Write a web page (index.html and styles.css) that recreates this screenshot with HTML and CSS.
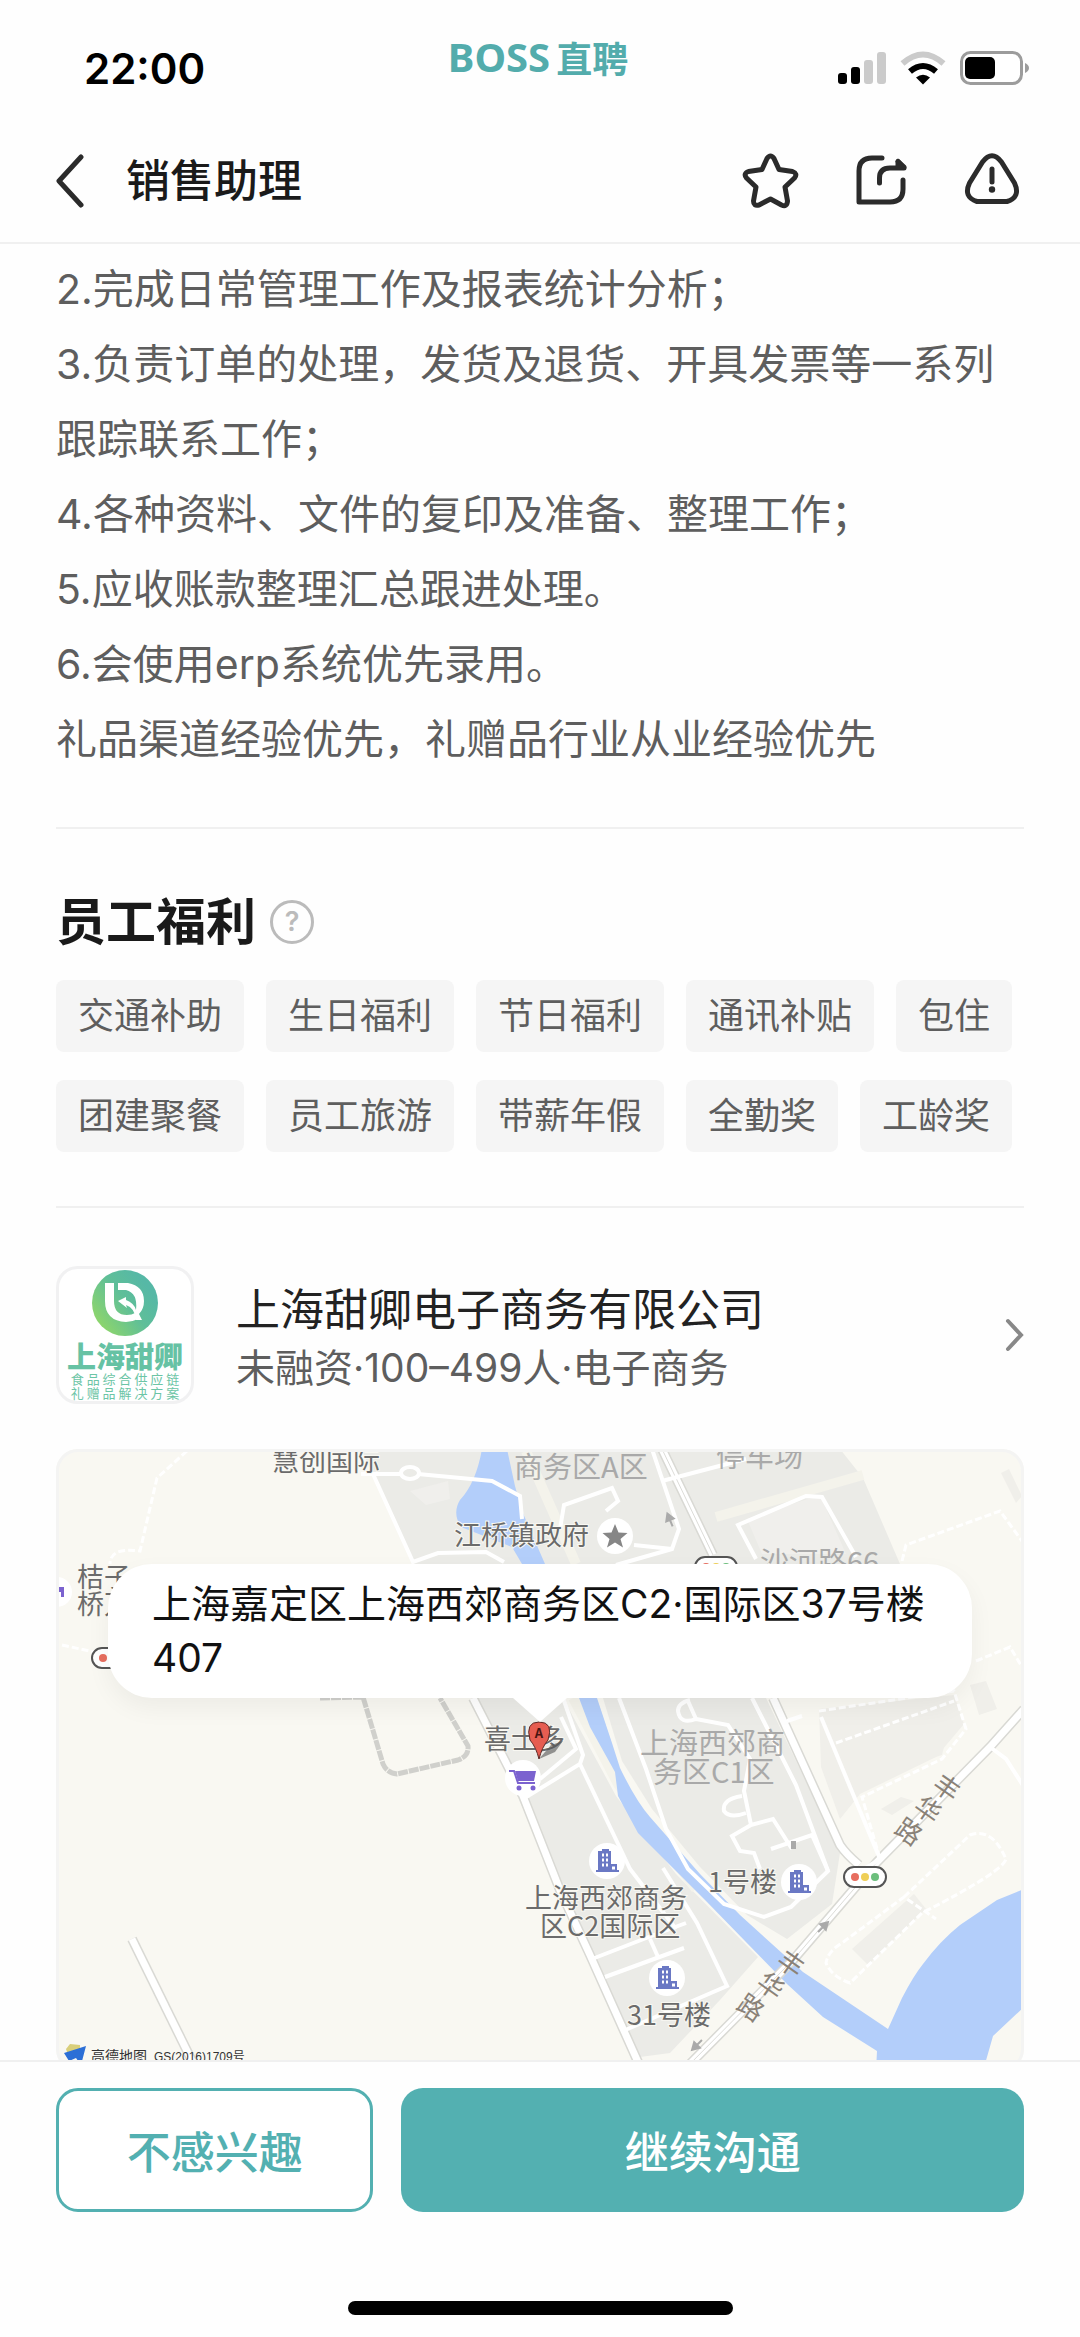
FILE: index.html
```html
<!DOCTYPE html>
<html lang="zh-CN">
<head>
    <meta charset="UTF-8">
    <meta name="viewport" content="width=device-width, initial-scale=1">
    <title>销售助理 - BOSS直聘</title>
    <link rel="stylesheet" href="styles.css">
</head>
<body>

<div class="status">
    <div class="time">22:00</div>
    <div class="brand"><span class="brand-en">BOSS</span><span>直聘</span></div>
    <div class="status-icons">
        <svg width="48" height="34" viewBox="0 0 48 34">
            <rect x="0" y="22" width="9" height="11" rx="3"/>
            <rect x="13" y="16" width="9" height="17" rx="3"/>
            <rect x="26" y="9" width="9" height="24" rx="3" fill="#cbcbcb"/>
            <rect x="39" y="1" width="9" height="32" rx="3" fill="#cbcbcb"/>
        </svg>
        <svg width="46" height="34" viewBox="0 0 46 34">
            <path d="M2.500 12.500 Q23 -5.500 43.500 12.500" fill="none" stroke="#cbcbcb" stroke-width="6"/>
            <path d="M10 20.500 Q23 9.500 36 20.500" fill="none" stroke="#000" stroke-width="6"/>
            <path d="M16 26.500 Q23 21 30 26.500 L23 33.500 Z"/>
        </svg>
        <svg width="70" height="34" viewBox="0 0 70 34">
            <rect x="1.500" y="1.500" width="60" height="31" rx="9" fill="#fff" stroke="#9c9c9c" stroke-width="3"/>
            <rect x="5" y="6" width="30" height="22" rx="5"/>
            <path d="M65 12 Q69 14 69 17 Q69 20 65 22 Z" fill="#9c9c9c"/>
        </svg>
    </div>
</div>

<header class="nav">
    <button class="icon-btn back" aria-label="返回">
        <svg width="30" height="56" viewBox="0 0 30 56"><path d="M27 4 L5 28 L27 52"/></svg>
    </button>
    <h1>销售助理</h1>
    <div class="nav-actions">
        <button class="icon-btn" aria-label="收藏">
            <svg width="66" height="66" viewBox="0 0 66 66">
                <path d="M29 10.500 Q32.500 5.500 36 10.500 L41 21.500 L54.500 23.500 Q60 25.500 56.500 30 L47 39 L49.500 53 Q49 59.500 43.500 57 L32.500 51 L21 57 Q15.500 58.500 15.500 53 L18 39 L8.500 30 Q5 25.500 10.500 23.500 L24 21.500 Z"/>
            </svg>
        </button>
        <button class="icon-btn" aria-label="分享">
            <svg width="66" height="66" viewBox="0 0 66 66">
                <path d="M34 10 H24 Q11 10 11 23 V54 H42 Q55 54 55 41 V32"/>
                <path d="M31.500 35 V30 Q31.500 20 42 20 H56 L50 13.500"/>
                <path d="M50 13.500 V19 H56 Z" fill="#2b2b2b"/>
            </svg>
        </button>
        <button class="icon-btn" aria-label="举报">
            <svg width="66" height="66" viewBox="0 0 66 66">
                <path d="M24.500 14 Q34 1.500 43.500 14 L56.500 35 Q63 49 49 53.500 H19 Q5 49 11.500 35 Z"/>
                <path d="M34 21 V34"/>
                <circle cx="34" cy="41.500" r="3.200" fill="#2b2b2b" stroke="none"/>
            </svg>
        </button>
    </div>
</header>

<main class="content">
    <div class="description">
        <p>2.完成日常管理工作及报表统计分析；</p>
        <p>3.负责订单的处理，发货及退货、开具发票等一系列跟踪联系工作；</p>
        <p>4.各种资料、文件的复印及准备、整理工作；</p>
        <p>5.应收账款整理汇总跟进处理。</p>
        <p>6.会使用erp系统优先录用。</p>
        <p>礼品渠道经验优先，礼赠品行业从业经验优先</p>
    </div>

    <section class="welfare">
        <div class="welfare-head">
            <h2>员工福利</h2>
            <button class="help" aria-label="福利说明">?</button>
        </div>
        <ul class="tags">
            <li>交通补助</li>
            <li>生日福利</li>
            <li>节日福利</li>
            <li>通讯补贴</li>
            <li>包住</li>
            <li>团建聚餐</li>
            <li>员工旅游</li>
            <li>带薪年假</li>
            <li>全勤奖</li>
            <li>工龄奖</li>
        </ul>
    </section>

    <a class="company" href="#company">
        <svg class="company-logo" width="138" height="138" viewBox="0 0 138 138">
            <defs>
                <linearGradient id="logo" x1="0" y1="0.800" x2="0.800" y2="0.200">
                    <stop offset="0" stop-color="#93d866"/>
                    <stop offset="0.600" stop-color="#5fbf98"/>
                    <stop offset="1" stop-color="#56b8a6"/>
                </linearGradient>
            </defs>
            <rect x="1.500" y="1.500" width="135" height="135" rx="20" fill="#fff" stroke="#f1f1f2" stroke-width="3"/>
            <circle cx="69" cy="37" r="33" fill="url(#logo)"/>
            <path d="M49 17 H58 V35 Q58 49 71 49 Q76 49 79 47 L82 53 Q76 56 70 56 Q49 55 49 35 Z" fill="#fff"/>
            <path d="M62 17 H72 Q88 20 88 35 Q88 43 83 48 L86 54 H80 Q79 42 70 39 L71 42 L62 35 L70 31 V34 Q78 37 80 44 Q82 27 70 24 H62 Z" fill="#fff"/>
            <text class="logo-name" x="69" y="102">上海甜卿</text>
            <text class="logo-sub" x="69" y="118">食 品 综 合 供 应 链</text>
            <text class="logo-sub" x="69" y="132">礼 赠 品 解 决 方 案</text>
        </svg>
        <div class="company-info">
            <div class="company-name">上海甜卿电子商务有限公司</div>
            <div class="company-meta">未融资·100–499人·电子商务</div>
        </div>
        <svg class="arrow" width="22" height="34" viewBox="0 0 22 34"><path d="M6 3 L19 17 L6 31"/></svg>
    </a>

    <div class="map">
        <svg class="map-canvas" viewBox="0 0 968 622" preserveAspectRatio="xMidYMin slice">
            <defs>
                <g id="building">
                    <circle r="18" fill="#fff"/>
                    <path d="M-11 11 V9 H-9 V-10 H-5 V-12 H2 V-10 H4 V3 H10 V9 H12 V11 Z" fill="#6a78c4"/>
                    <path d="M-5 -6 h2 M-1 -6 h2 M-5 -1 h2 M-1 -1 h2 M-5 4 h2 M-1 4 h2 M5 7 h3" stroke="#fff" stroke-width="3"/>
                </g>
                <g id="light">
                    <rect x="-21" y="-10" width="42" height="20" rx="10" fill="#fff" stroke="#555" stroke-width="2"/>
                    <circle cx="-10" r="4" fill="#e76e5f"/>
                    <circle r="4" fill="#efcf57"/>
                    <circle cx="10" r="4" fill="#6cbf7d"/>
                </g>
                <path id="way" d="M-7 0 H4 M0 -4 L7 0 L0 4 Z" stroke="#aaa" stroke-width="2" fill="#aaa"/>
            </defs>

            <!-- blocks -->
            <g fill="#ebebe7">
                <path d="M305 0 H784 L807 29 L844 115 H357 L317 25 Z"/>
                <path d="M417 249 H507 L560 347 L620 425 L702 508 L664 551 L614 604 L584 608 L534 506 L504 441 Z"/>
                <path d="M547 249 H710 L784 404 L776 455 L731 490 L691 466 L644 418 L596 360 L566 312 Z"/>
            </g>
            <g fill="#f0efea">
                <path d="M763 260 L898 246 L908 275 L880 308 L804 345 L784 370 L765 318 Z"/>
                <path d="M780 300 L897 262 L886 306 L806 332 Z M825 360 L845 348 L858 352 L836 366 Z"/>
                <path d="M914 236 L930 232 L941 260 L923 266 Z M945 24 L953 20 L966 47 L960 54 Z"/>
                <path d="M796 500 L858 445 L870 460 L812 516 Z"/>
            </g>
            <path d="M354 42 L392 32 L394 50 L370 56 Z M691 70 L764 46 L790 105 H706 Z" fill="#f0efec"/>
            <path d="M660 68 L807 26 M470 2 L520 115 M517 249 L562 335 L640 440" fill="none" stroke="#f4f3eb" stroke-width="10"/>

            <!-- water -->
            <g fill="#b3cefa">
                <path d="M426 0 H451 L459 37 L466 62 L489 115 H466 L456 98 L405 78 Q396 64 404 51 Q420 34 426 0 Z"/>
                <path d="M523 249 H541 L556 294 L564 319 Q580 352 594 368 L644 425 L684 466 L747 523 L832 580 L846 549 Q858 526 867 515 Q884 492 904 476 L941 451 L968 440 V558 L937 587 L927 622 H820 L821 602 L767 568 L731 535 L651 453 L582 384 L562 347 L559 323 L534 278 Z"/>
            </g>

            <!-- roads with a light grey edge -->
            <g fill="none" stroke="#d9d9d4" stroke-width="10">
                <path d="M606 0 L657 106 M717 249 L784 396 Q790 405 803 416"/>
                <path d="M968 260 L934 298 L821 413 L737 511 L627 622"/>
                <path d="M417 249 L467 347 L504 441 L534 506 L586 622"/>
                <path d="M76 490 L136 612"/>
            </g>
            <g fill="none" stroke="#fff" stroke-width="7">
                <path d="M606 0 L657 106 M717 249 L784 396 Q790 405 803 416"/>
                <path d="M968 260 L934 298 L821 413 L737 511 L627 622"/>
                <path d="M417 249 L467 347 L504 441 L534 506 L586 622"/>
                <path d="M76 490 L136 612"/>
            </g>
            <path d="M606 0 L657 106 M821 413 L737 511 L627 622" fill="none" stroke="#dcdcd8" stroke-width="1"/>

            <!-- lanes -->
            <g fill="none" stroke="#fff" stroke-width="4">
                <path d="M305 25 H346 M362 25 L436 32 L464 47 L466 70 M317 25 L357 113 L382 104 L430 103 L448 113"/>
                <ellipse cx="354" cy="24" rx="9" ry="6"/>
                <path d="M596 0 L623 80 L616 100 L560 116 M504 80 L508 56 L556 39 L562 52 L550 62 M578 96 L616 100"/>
                <path d="M606 32 L690 10 M700 110 L682 76 L750 47 L766 48 L800 108"/>
                <path d="M467 350 L524 315 L527 306 L507 249 M524 315 L574 420 L620 480 M484 330 L520 300 L505 268"/>
                <path d="M536 510 L598 486 L630 474 M549 528 L628 499 M594 490 L602 508 M567 582 L671 537 L641 474 L607 419"/>
                <path d="M563 249 L590 320 L610 380 L632 420 L668 455 L708 468 L735 458 L772 422 L756 386 L715 400"/>
                <path d="M632 252 L640 270 Q624 276 622 262 Q622 254 634 251 M640 270 L672 276 L694 310 L688 342 L695 376 L717 370 L736 400 M695 376 L676 387 L684 402 L698 404 L704 420"/>
                <path d="M686 347 Q666 350 668 362 Q674 370 690 364 M696 249 L740 336 L772 422 M731 272 L746 267 M934 298 L950 310 L968 338"/>
                <path d="M808 420 L824 410 L765 268"/>
            </g>
            <g fill="none" stroke="#fff" stroke-width="3" stroke-dasharray="7 3">
                <path d="M131 2 L101 29 L84 102 Q54 98 54 115 M6 196 L38 203"/>
                <path d="M846 112 L850 96 L944 62 L966 92 M763 262 L898 242 L910 280 L886 310 L806 348 L824 410 M780 294 L898 252 M920 212 L954 198 L966 218"/>
                <path d="M848 448 L914 386 Q936 378 950 410 Q948 422 866 464 L794 534 Q776 528 770 514 Q772 502 786 494 L848 448 L880 470"/>
            </g>
            <path d="M264 249 L307 248 L327 315 Q331 324 341 325 L402 311 Q413 307 412 297 L384 249" fill="none" stroke="#d0d0cc" stroke-width="5" stroke-dasharray="10 1"/>
            <use href="#way" transform="translate(614 71) rotate(-112)"/>
            <use href="#way" transform="translate(767 478) rotate(-45)"/>
            <use href="#way" transform="translate(641 596) rotate(135)"/>
            <rect x="735" y="392" width="5" height="8" fill="#aaa"/>

            <!-- labels -->
            <g class="area">
                <text x="458" y="29">商务区A区</text>
                <text x="660" y="18">停车场</text>
                <text x="704" y="124">沙河路66</text>
                <text x="584" y="305">上海西郊商</text>
                <text x="597" y="334">务区C1区</text>
            </g>
            <g class="poi">
                <text x="216" y="22">慧创国际</text>
                <text x="398" y="96">江桥镇政府</text>
                <text x="21" y="138">桔子</text>
                <text x="21" y="165">桥万</text>
                <text x="428" y="300">喜士多</text>
                <text x="469" y="459">上海西郊商务</text>
                <text x="484" y="487">区C2国际区</text>
                <text x="652" y="443">1号楼</text>
                <text x="571" y="576">31号楼</text>
            </g>
            <g class="road">
                <text transform="translate(892 337) rotate(35)">丰</text>
                <text transform="translate(873 359) rotate(35)">华</text>
                <text transform="translate(854 381) rotate(35)">路</text>
                <text transform="translate(736 513) rotate(35)">丰</text>
                <text transform="translate(716 535) rotate(35)">华</text>
                <text transform="translate(696 557) rotate(35)">路</text>
            </g>

            <!-- markers -->
            <circle cx="559" cy="87" r="18" fill="#fff"/>
            <path d="M559 75 L562.500 83.500 L571.500 84 L564.500 90 L567 98.500 L559 93.500 L551 98.500 L553.500 90 L546.500 84 L555.500 83.500 Z" fill="#868686"/>
            <circle cx="1" cy="143" r="15" fill="#fff"/>
            <path d="M0 138 H8 V148 H5 V143 H0 Z" fill="#7b62cf"/>
            <circle cx="467" cy="329" r="18" fill="#fff"/>
            <path d="M453 322 H458 L462 334 H479" fill="none" stroke="#7b62cf" stroke-width="2"/>
            <path d="M459 322 H480 L478 332 H462 Z" fill="#7b62cf"/>
            <circle cx="463" cy="339" r="2.500" fill="#7b62cf"/>
            <circle cx="477" cy="339" r="2.500" fill="#7b62cf"/>
            <use href="#building" x="551" y="412"/>
            <use href="#building" x="743" y="433"/>
            <use href="#building" x="611" y="529"/>
            <use href="#light" x="809" y="428"/>
            <use href="#light" x="57" y="209"/>
            <use href="#light" x="660" y="118"/>
            <path d="M483 310 L495 296 L507 292 L499 303 Z" fill="#555" opacity="0.600"/>
            <path d="M483 310 Q480 298 474 291 Q469 273 483 273 Q498 273 492 291 Q486 298 483 310 Z" fill="#e65d51" stroke="#5d2b28" stroke-width="1"/>
            <text class="pin" x="483" y="289">A</text>

            <!-- map credit -->
            <path d="M10 600 L14 595 L24 596 V604 L14 612 Z" fill="#d9cf7a"/>
            <path d="M8 604 L30 597 L25 616 L20 609 L13 612 Z" fill="#2c6fd6"/>
            <text class="credit" x="35" y="612">高德地图</text>
            <text class="credit credit-code" x="98" y="612">GS(2016)1709号</text>
        </svg>
        <div class="address">上海嘉定区上海西郊商务区C2·国际区37号楼407</div>
    </div>
</main>

<footer class="actions">
    <div class="buttons">
        <button class="btn btn-outline">不感兴趣</button>
        <button class="btn btn-primary">继续沟通</button>
    </div>
    <div class="home-bar"></div>
</footer>

</body>
</html>
```
FILE: styles.css
```css
* {
    box-sizing: border-box;
}

body {
    margin: 0;
    height: 100vh;
    display: flex;
    flex-direction: column;
    overflow: hidden;
    background: #fefefe;
    color: #1a1a1a;
    font-family: Inter, "Noto Sans CJK SC", sans-serif;
}

h1, h2, p, ul {
    margin: 0;
    padding: 0;
}

button {
    border: none;
    padding: 0;
    background: none;
    font-family: inherit;
    cursor: pointer;
}

svg {
    display: block;
}

/* status bar */
.status {
    display: grid;
    grid-template-columns: 1fr auto 1fr;
    align-items: start;
    height: 120px;
    padding: 36px 50px 0 84px;
    flex-shrink: 0;
}

.time {
    margin-top: 12px;
    font-size: 42px;
    line-height: 42px;
    font-weight: 600;
    color: #000;
}

.brand {
    display: flex;
    align-items: center;
    gap: 6px;
    margin-right: 38px;
    font-size: 36px;
    line-height: 42px;
    font-weight: 700;
    color: #53acac;
    font-family: "Noto Sans CJK SC", sans-serif;
}

.brand-en {
    font-family: "Noto Sans", sans-serif;
    font-size: 40px;
}

.status-icons {
    display: flex;
    justify-content: flex-end;
    gap: 14px;
    margin-top: 15px;
}

/* title bar */
.nav {
    display: flex;
    align-items: center;
    height: 124px;
    padding: 0 56px 0 54px;
    border-bottom: 2px solid #f0f0f0;
    flex-shrink: 0;
}

.nav h1 {
    margin-left: 42px;
    font-size: 44px;
    line-height: 60px;
    font-weight: 500;
}

.nav-actions {
    display: flex;
    gap: 44px;
    margin-left: auto;
}

.icon-btn path {
    stroke: #2b2b2b;
    stroke-width: 5;
    stroke-linecap: round;
    stroke-linejoin: round;
    fill: none;
}

/* page content */
.content {
    flex: 1;
    min-height: 0;
    overflow: hidden;
    padding: 8px 56px 0;
}

.description {
    padding-bottom: 50px;
    border-bottom: 2px solid #f0f0f0;
    font-size: 41px;
    line-height: 75px;
    color: #5e5e5e;
}

.welfare {
    padding: 58px 0 54px;
    border-bottom: 2px solid #f0f0f0;
}

.welfare-head {
    display: flex;
    align-items: center;
    gap: 14px;
    margin-bottom: 23px;
}

.welfare-head h2 {
    font-size: 50px;
    line-height: 70px;
    font-weight: 700;
}

.help {
    width: 44px;
    height: 44px;
    border: 3px solid #bbb;
    border-radius: 50%;
    font-size: 27px;
    line-height: 36px;
    font-weight: 600;
    color: #bbb;
}

.tags {
    display: flex;
    flex-wrap: wrap;
    gap: 28px 22px;
    list-style: none;
}

.tags li {
    padding: 0 22px;
    border-radius: 8px;
    background: #f5f5f5;
    font-size: 36px;
    line-height: 72px;
    color: #5e5e5e;
}

/* company */
.company {
    display: flex;
    align-items: center;
    padding: 58px 0 45px;
    color: inherit;
    text-decoration: none;
}

.company-info {
    flex: 1;
    margin-left: 42px;
    padding-top: 6px;
}

.company-name {
    font-size: 44px;
    line-height: 60px;
    color: #222;
}

.company-meta {
    font-size: 39px;
    line-height: 56px;
    color: #5e5e5e;
}

.arrow path {
    fill: none;
    stroke: #888;
    stroke-width: 4;
    stroke-linecap: round;
}

.logo-name {
    font-size: 29px;
    font-weight: 900;
    fill: #66c2a4;
    text-anchor: middle;
}

.logo-sub {
    font-family: "Noto Sans CJK SC", sans-serif;
    font-size: 13px;
    fill: #6cc5a6;
    text-anchor: middle;
}

/* map */
.map {
    position: relative;
    height: 622px;
    border-radius: 22px;
    background: #f9f8f2;
}

.map-canvas {
    width: 100%;
    height: 100%;
    border-radius: 22px;
}

/* frame drawn over the canvas edge */
.map::before {
    content: "";
    position: absolute;
    inset: 0;
    border: 3px solid #f4f4f3;
    border-radius: 22px;
}

.map-canvas text {
    font-family: "Noto Sans CJK SC", sans-serif;
}

.map-canvas .area {
    font-size: 29px;
    fill: #a9a9a9;
}

.map-canvas .poi {
    font-size: 27px;
    fill: #6b6b6b;
    stroke: #f9f8f2;
    stroke-width: 2px;
    paint-order: stroke;
}

.map-canvas .road {
    font-size: 26px;
    fill: #8a8278;
    text-anchor: middle;
    dominant-baseline: central;
}

.map-canvas .pin {
    font-size: 13px;
    font-weight: 700;
    fill: #4a1512;
    text-anchor: middle;
}

.map-canvas .credit {
    font-family: "Liberation Sans", "Noto Sans CJK SC", sans-serif;
    font-size: 14px;
    fill: #333;
}

.map-canvas .credit-code {
    font-size: 12px;
}

.address {
    position: absolute;
    top: 115px;
    left: 52px;
    right: 52px;
    padding: 13px 32px 13px 44px;
    border-radius: 44px;
    background: #fff;
    box-shadow: 0 10px 24px rgba(0, 0, 0, 0.05);
    font-size: 39px;
    line-height: 54px;
    color: #111;
}

.address::after {
    content: "";
    position: absolute;
    top: 100%;
    left: 50%;
    margin-left: -27px;
    border: 27px solid transparent;
    border-top: 24px solid #fff;
    border-bottom: none;
}

/* bottom actions */
.actions {
    flex-shrink: 0;
    padding: 26px 56px 22px;
    border-top: 2px solid #f0f0f0;
    background: #fefefe;
}

.buttons {
    display: flex;
    gap: 28px;
}

.btn {
    height: 124px;
    border-radius: 22px;
    font-size: 44px;
    font-weight: 500;
}

.btn-outline {
    flex: 1;
    border: 3px solid #53b0b1;
    background: #fff;
    color: #53b0b1;
}

.btn-primary {
    flex: 2;
    background: #53b0b1;
    color: #fff;
}

.home-bar {
    width: 385px;
    height: 14px;
    margin: 89px auto 0;
    border-radius: 7px;
    background: #000;
}
```
